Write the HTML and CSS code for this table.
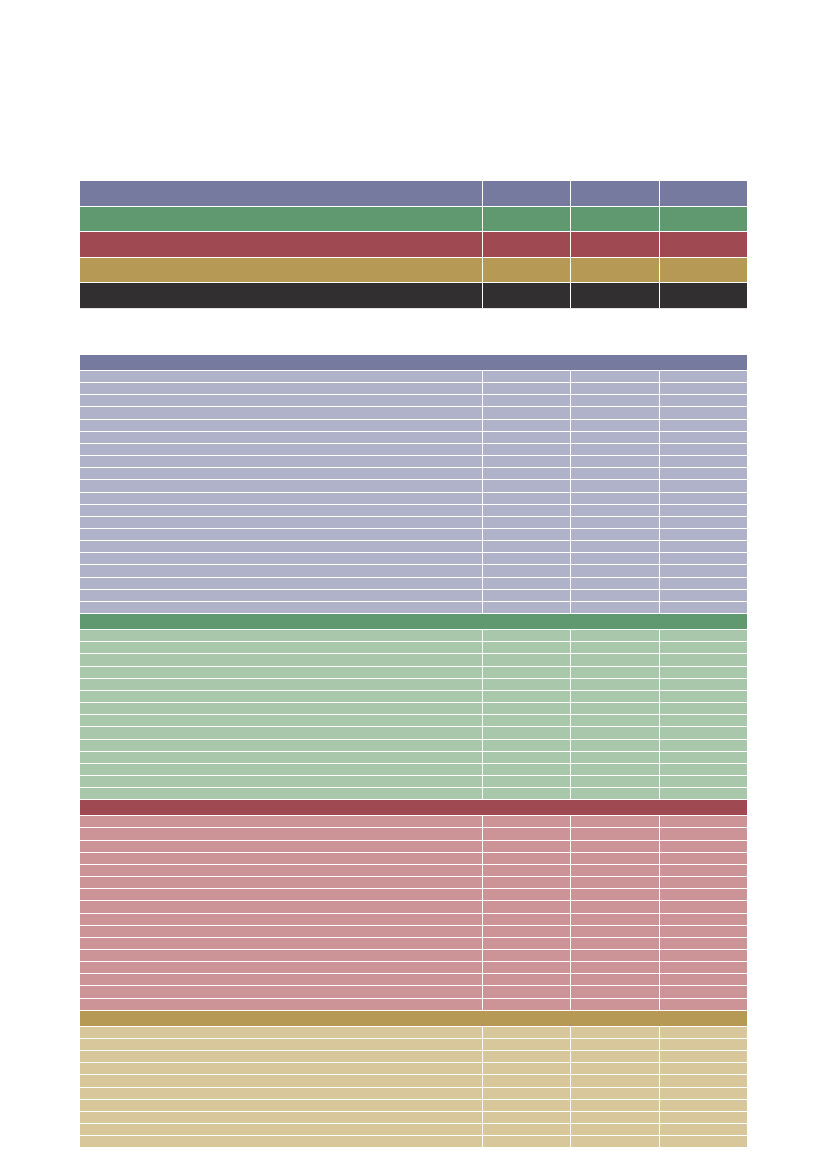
FILE: index.html
```html
<!DOCTYPE html>
<html>
<head>
<meta charset="utf-8">
<link rel="stylesheet" href="styles.css">
</head>
<body>
<div class="page">
  <div class="summary">
    <div class="row big c-purple"><div></div><div></div><div></div><div></div></div>
    <div class="row big c-green"><div></div><div></div><div></div><div></div></div>
    <div class="row big c-red"><div></div><div></div><div></div><div></div></div>
    <div class="row big c-gold"><div></div><div></div><div></div><div></div></div>
    <div class="row big c-dark"><div></div><div></div><div></div><div></div></div>
  </div>
  <div class="detail" id="detail"></div>
</div>
<script>
  var sections = [["purple", 20], ["green", 14], ["red", 16], ["gold", 10]];
  var d = document.getElementById("detail");
  sections.forEach(function (s) {
    var h = document.createElement("div");
    h.className = "head c-" + s[0];
    d.appendChild(h);
    for (var i = 0; i < s[1]; i++) {
      var r = document.createElement("div");
      r.className = "row small l-" + s[0];
      r.innerHTML = "<div></div><div></div><div></div><div></div>";
      d.appendChild(r);
    }
  });
</script>
</body>
</html>
```
FILE: styles.css
```css
html, body {
  margin: 0;
  padding: 0;
  background: #ffffff;
  font-family: "Liberation Sans", Arial, sans-serif;
}
.page {
  padding: 181px 0 0 80px;
  width: 667px;
}
.summary {
  border-bottom: 1px solid #e4e4e4;
  margin-bottom: 46px;
}
.row {
  display: grid;
  grid-template-columns: 402px 87px 88px 87px;
  column-gap: 1px;
  margin-bottom: 1px;
}
.summary .row:last-child {
  margin-bottom: 0;
}
.row.big {
  height: 24.6px;
}
.row.small {
  height: 11.17px;
}
.head {
  height: 15px;
  margin-bottom: 1px;
}
.c-purple, .c-purple > div { background: #767a9e; }
.c-green, .c-green > div { background: #60986f; }
.c-red, .c-red > div { background: #9f4a52; }
.c-gold, .c-gold > div { background: #b59955; }
.c-dark, .c-dark > div { background: #312f30; }
.row.c-purple, .row.c-green, .row.c-red, .row.c-gold, .row.c-dark { background: transparent; }
.l-purple > div { background: #b0b2ca; }
.l-green > div { background: #a8c7ab; }
.l-red > div { background: #cd9498; }
.l-gold > div { background: #d8c79a; }
```
